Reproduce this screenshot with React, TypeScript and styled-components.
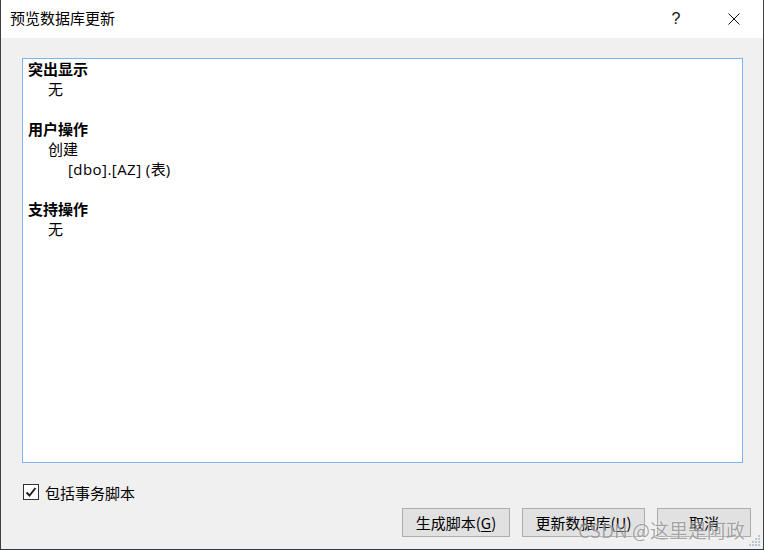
import React from "react";
import styled, { createGlobalStyle } from "styled-components";

const Global = createGlobalStyle`
  html, body { margin: 0; padding: 0; background: #f0f0f0; }
  body { font-family: "Noto Sans CJK SC", "Noto Sans", sans-serif; }
  * { box-sizing: border-box; }
`;

const Window = styled.div`
  position: relative;
  width: 764px;
  height: 550px;
  background: #f0f0f0;
  border-left: 1px solid #3f3f3f;
  border-right: 1px solid #3f3f3f;
  border-bottom: 1px solid #2b3a4a;
  display: flex;
  flex-direction: column;
  overflow: hidden;
  color: #000;
`;

const TitleBar = styled.div`
  height: 38px;
  background: #fff;
  display: flex;
  align-items: center;
  padding-left: 9px;
  flex-shrink: 0;
`;

const Title = styled.div`
  flex: 1;
  font-size: 15px;
  line-height: 20px;
  margin-top: -2px;
`;

const TitleButton = styled.div<{ $w: number }>`
  width: ${(p) => p.$w}px;
  height: 38px;
  display: flex;
  align-items: center;
  justify-content: center;
  font-family: "Liberation Sans", sans-serif;
  font-size: 16px;
  font-weight: 300;
  color: #111;
`;

const Body = styled.div`
  flex: 1;
  display: flex;
  flex-direction: column;
  padding: 20px 12px 12px 21px;
`;

const Panel = styled.div`
  width: 721px;
  height: 405px;
  background: #fff;
  border: 1px solid #7eb4ea;
  padding: 0 5px;
`;

const Line = styled.div<{ $level: number; $bold?: boolean }>`
  height: 20px;
  line-height: 20px;
  font-size: 15px;
  padding-left: ${(p) => p.$level * 20}px;
  font-weight: ${(p) => (p.$bold ? 700 : 400)};
  white-space: pre;
`;

const Latin = styled.span`
  font-family: "Open Sans", sans-serif;
  font-size: 15px;
  letter-spacing: 0.45px;
`;

const CheckRow = styled.label`
  display: flex;
  align-items: center;
  gap: 6px;
  margin-top: 21px;
  margin-left: 1px;
  height: 16px;
  font-size: 15px;
`;

const Box = styled.span`
  width: 16px;
  height: 16px;
  border: 1px solid #333;
  background: #fff;
  display: flex;
  align-items: center;
  justify-content: center;
`;

const ButtonRow = styled.div`
  display: flex;
  justify-content: flex-end;
  gap: 12px;
  margin-top: 8px;
`;

const Button = styled.button<{ $w: number }>`
  width: ${(p) => p.$w}px;
  height: 29px;
  background: #e1e1e1;
  border: 1px solid #adadad;
  font-family: "Noto Sans CJK SC", sans-serif;
  font-size: 15px;
  color: #000;
  padding: 0;
  display: flex;
  align-items: center;
  justify-content: center;
  line-height: 20px;
`;

const U = styled.span`
  text-decoration: underline;
  text-underline-offset: 2px;
`;

const Watermark = styled.div`
  position: absolute;
  left: 577px;
  top: 515px;
  font-size: 19px;
  line-height: 30px;
  color: rgba(95, 95, 95, 0.55);
  text-shadow: 0 0 2px rgba(255, 255, 255, 0.9);
  pointer-events: none;
  white-space: nowrap;
  font-family: "Noto Sans CJK SC", sans-serif;
`;

const Grip = styled.svg`
  position: absolute;
  right: 2px;
  bottom: 2px;
`;

export default function App() {
  const dots: [number, number][] = [];
  for (let r = 0; r < 4; r++) {
    for (let c = 3 - r; c < 4; c++) {
      dots.push([c * 3, r * 3]);
    }
  }
  return (
    <>
      <Global />
      <Window>
        <TitleBar>
          <Title>预览数据库更新</Title>
          <TitleButton $w={58}>?</TitleButton>
          <TitleButton $w={58}>
            <svg width="12" height="12" viewBox="0 0 12 12">
              <path d="M0.5 0.5 L11.5 11.5 M11.5 0.5 L0.5 11.5" stroke="#111" strokeWidth="1" />
            </svg>
          </TitleButton>
        </TitleBar>
        <Body>
          <Panel>
            <Line $level={0} $bold>突出显示</Line>
            <Line $level={1}>无</Line>
            <Line $level={0}> </Line>
            <Line $level={0} $bold>用户操作</Line>
            <Line $level={1}>创建</Line>
            <Line $level={2}>
              <Latin>[dbo].[AZ] (</Latin>表<Latin>)</Latin>
            </Line>
            <Line $level={0}> </Line>
            <Line $level={0} $bold>支持操作</Line>
            <Line $level={1}>无</Line>
          </Panel>
          <CheckRow>
            <Box>
              <svg width="12" height="12" viewBox="0 0 12 12">
                <path d="M1.5 6.5 L4.5 9.5 L10.5 2" stroke="#222" strokeWidth="2" fill="none" />
              </svg>
            </Box>
            包括事务脚本
          </CheckRow>
          <ButtonRow>
            <Button $w={108}>
              生成脚本(<U>G</U>)
            </Button>
            <Button $w={123}>
              更新数据库(<U>U</U>)
            </Button>
            <Button $w={94}>取消</Button>
          </ButtonRow>
        </Body>
        <Watermark>CSDN @这里是阿政</Watermark>
        <Grip width="12" height="12" viewBox="0 0 12 12">
          {dots.map(([x, y], i) => (
            <rect key={i} x={x} y={y} width="2" height="2" fill="#bcc6d2" />
          ))}
        </Grip>
      </Window>
    </>
  );
}
